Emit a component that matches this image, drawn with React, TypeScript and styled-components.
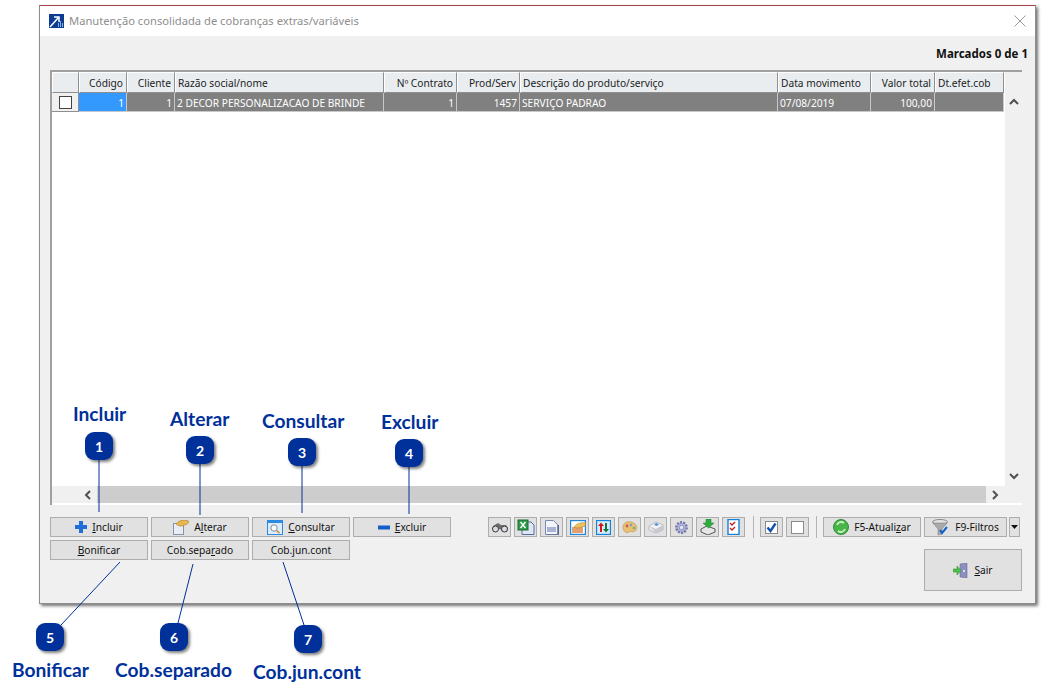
import React from "react";
import styled, { createGlobalStyle } from "styled-components";

const Global = createGlobalStyle`
  html, body { margin: 0; padding: 0; background: #fff; }
  body { font-family: "Noto Sans", "Liberation Sans", sans-serif; }
  #root { width: 1058px; height: 700px; position: relative; overflow: hidden; }
`;

const Page = styled.div`
  position: relative;
  width: 1058px;
  height: 700px;
  padding: 5px 0 0 39px;
  box-sizing: border-box;
  background: #fff;
`;

const Window = styled.div`
  width: 997px;
  height: 599px;
  box-sizing: border-box;
  display: flex;
  flex-direction: column;
  background: #f0f0f0;
  border: 1px solid #8d8d8d;
  border-top-color: #a8424c;
  box-shadow: 2px 2px 3px rgba(0, 0, 0, 0.55);
`;

const TitleBar = styled.div`
  height: 30px;
  flex: none;
  box-sizing: border-box;
  background: #fff;
  display: flex;
  align-items: center;
  padding: 0 9px 1px;
  gap: 5px;
`;

const TitleText = styled.span`
  flex: 1;
  font-size: 11.2px;
  color: #8e8e8e;
  white-space: nowrap;
`;

const Content = styled.div`
  flex: 1;
  display: flex;
  flex-direction: column;
  padding: 0 13px 0 10px;
`;

const Marked = styled.div`
  height: 34px;
  flex: none;
  display: flex;
  align-items: center;
  justify-content: flex-end;
  font-size: 11.5px;
  font-weight: 700;
  color: #111;
  margin-right: -6px;
`;

const GridFrame = styled.div`
  width: 972px;
  height: 435px;
  box-sizing: border-box;
  flex: none;
  border-top: 2px solid #a0a0a0;
  border-left: 2px solid #a0a0a0;
  background: #fff;
  display: flex;
  flex-direction: column;
`;

const GridBody = styled.div`
  flex: 1;
  display: flex;
  min-height: 0;
`;

const Table = styled.div`
  width: 952px;
  flex: none;
  display: flex;
  flex-direction: column;
`;

const columns = "27px 48px 48px 209px 73px 63px 258px 93px 64px 69px";

const HeaderRow = styled.div`
  display: grid;
  grid-template-columns: ${columns};
  height: 21px;
  flex: none;
`;

const HeadCell = styled.div<{ $right?: boolean }>`
  box-sizing: border-box;
  background: #e9edf0;
  border-right: 1px solid #8f8f8f;
  border-bottom: 1px solid #8f8f8f;
  border-top: 1px solid #fff;
  border-left: 1px solid #fff;
  font-size: 10.2px;
  color: #222;
  line-height: 20px;
  padding: 0 3px 0 2px;
  text-align: ${(p) => (p.$right ? "right" : "left")};
  white-space: nowrap;
  overflow: hidden;
`;

const DataRow = styled.div`
  display: grid;
  grid-template-columns: ${columns};
  height: 19px;
  flex: none;
`;

const DataCell = styled.div<{ $right?: boolean; $active?: boolean }>`
  box-sizing: border-box;
  background: ${(p) => (p.$active ? "#3399ff" : "#808080")};
  border-right: 1px solid #c8c8c8;
  border-bottom: 1px solid #c8c8c8;
  font-size: 10.2px;
  color: #fff;
  line-height: 20px;
  padding: 0 2px;
  text-align: ${(p) => (p.$right ? "right" : "left")};
  white-space: nowrap;
  overflow: hidden;
`;

const CheckCell = styled.div`
  box-sizing: border-box;
  background: #f0f0f0;
  border-right: 1px solid #8f8f8f;
  border-bottom: 1px solid #8f8f8f;
  display: flex;
  align-items: center;
  justify-content: center;
`;

const RowBox = styled.span`
  width: 11px;
  height: 11px;
  background: #fff;
  border: 1px solid #444;
`;

const VScroll = styled.div`
  width: 18px;
  flex: none;
  background: #f0f0f0;
  display: flex;
  flex-direction: column;
  justify-content: space-between;
  align-items: center;
  padding: 26px 0 5px;
  box-sizing: border-box;
  border-left: 1px solid #fff;
`;

const HScroll = styled.div`
  height: 17px;
  flex: none;
  display: flex;
  align-items: stretch;
  background: #f0f0f0;
  border-bottom: 2px solid #fff;
`;

const HCorner = styled.div`
  width: 27px;
  flex: none;
`;

const HBtn = styled.div`
  width: 18px;
  flex: none;
  display: flex;
  align-items: center;
  justify-content: center;
`;

const HTrack = styled.div`
  flex: none;
  width: 889px;
  background: #cdcdcd;
`;

const Footer = styled.div`
  display: grid;
  grid-template-columns: 1fr auto;
  padding-top: 12px;
`;

const ButtonColumn = styled.div`
  display: flex;
  flex-direction: column;
  gap: 3px;
`;

const ButtonRow = styled.div`
  display: flex;
  gap: 3px;
`;

const Btn = styled.div<{ $w?: number; $h?: number }>`
  box-sizing: border-box;
  width: ${(p) => p.$w ?? 98}px;
  height: ${(p) => p.$h ?? 20}px;
  flex: none;
  background: #e1e1e1;
  border: 1px solid #adadad;
  display: flex;
  align-items: center;
  justify-content: center;
  gap: 5px;
  font-size: 10.2px;
  color: #111;
  white-space: nowrap;
`;

const U = styled.span`
  text-decoration: underline;
  text-underline-offset: 1px;
`;

const RightArea = styled.div`
  display: flex;
  flex-direction: column;
  align-items: flex-end;
`;

const Tools = styled.div`
  display: flex;
  align-items: flex-start;
  gap: 3px;
`;

const ToolBtn = styled(Btn)`
  width: 23px;
  height: 20px;
`;

const Sep = styled.div<{ $left: number }>`
  width: 1px;
  height: 22px;
  background: #b4b4b4;
  margin: -1px 3px -1px ${(p) => p.$left}px;
  flex: none;
`;

const Caret = styled(Btn)`
  width: 11px;
  margin-left: -1px;
  margin-right: 2px;
`;

const ExitRow = styled.div`
  margin-top: 12px;
`;

const Overlay = styled.svg`
  position: absolute;
  left: 0;
  top: 0;
  pointer-events: none;
`;

const Badge = styled.div<{ $x: number; $y: number }>`
  position: absolute;
  left: ${(p) => p.$x}px;
  top: ${(p) => p.$y}px;
  width: 28px;
  height: 28px;
  border-radius: 9px;
  background: #00309a;
  color: #fff;
  font-family: "Lato", sans-serif;
  font-weight: 700;
  font-size: 14px;
  display: flex;
  align-items: center;
  justify-content: center;
  box-shadow: 2px 2px 3px rgba(0, 0, 0, 0.5);
`;

const Callout = styled.div<{ $x: number; $y: number }>`
  position: absolute;
  left: ${(p) => p.$x}px;
  top: ${(p) => p.$y}px;
  font-family: "Lato", sans-serif;
  font-weight: 700;
  font-size: 19.2px;
  line-height: 22px;
  color: #00309a;
  white-space: nowrap;
`;

const Plus = () => (
  <svg width="12" height="12" viewBox="0 0 12 12"><path d="M4 0h4v4h4v4H8v4H4V8H0V4h4z" fill="#1f6fd6" /></svg>
);
const Minus = () => (
  <svg width="12" height="5" viewBox="0 0 12 5"><rect width="12" height="4" y="0.5" fill="#1560c8" /></svg>
);
const Edit = () => (
  <svg width="16" height="15" viewBox="0 0 16 15">
    <rect x="0.5" y="3.5" width="10" height="11" fill="#e8ecf4" stroke="#8a94a8" />
    <path d="M3 4 C5 1 10 -1 15.500 1 C16 3 14 5 11 5 C9 7 5 6 3 4z" fill="#e9b64f" stroke="#a9782a" strokeWidth="0.6" />
  </svg>
);
const Search = () => (
  <svg width="16" height="15" viewBox="0 0 16 15">
    <rect x="0.5" y="0.5" width="15" height="14" fill="#dcecfb" stroke="#2b8be0" />
    <rect x="1" y="1" width="14" height="2" fill="#2b8be0" />
    <circle cx="7" cy="8" r="3.2" fill="#fff" stroke="#7a8aa0" />
    <path d="M9.5 10.5l3 2.5" stroke="#c88a2a" strokeWidth="1.6" />
  </svg>
);
const Binoculars = () => (
  <svg width="16" height="11" viewBox="0 0 16 11">
    <path d="M1 4l5-3 3 2 5 0 2 3-1 4H11L8 7H6L4 10H2L0 7z" fill="#6d6d6d" />
    <circle cx="3.500" cy="7" r="3" fill="#d9dce2" stroke="#3d3d3d" />
    <circle cx="12.500" cy="7" r="3" fill="#d9dce2" stroke="#3d3d3d" />
  </svg>
);
const Excel = () => (
  <svg width="18" height="16" viewBox="0 0 18 16">
    <path d="M5 3h9l3 3v9.500H5z" fill="#dfe6f4" stroke="#53719f" />
    <rect x="1" y="1" width="10" height="10" fill="#2f9a4a" stroke="#1d6b33" />
    <path d="M3.500 3l5 6M8.500 3l-5 6" stroke="#fff" strokeWidth="1.400" />
  </svg>
);
const Doc = () => (
  <svg width="14" height="15" viewBox="0 0 14 15">
    <path d="M0.5 .5h8l4 4v10H.5z" fill="#f2f4fb" stroke="#7c88ad" /><rect x="2" y="7" width="9" height="5" fill="#a9b4d4" />
    <path d="M13.500 5v10H2" fill="none" stroke="#5d678a" />
  </svg>
);
const Calendar = () => (
  <svg width="16" height="15" viewBox="0 0 16 15">
    <rect x=".5" y=".5" width="15" height="14" fill="#fff" stroke="#1f86dc" strokeWidth="1.400" />
    <rect x="2" y="7" width="11" height="6" fill="#e3a06d" />
    <path d="M4 7 C7 3 11 2 16 3 L15 6 C12 7 9 8 7 8z" fill="#efc15a" stroke="#a9782a" strokeWidth="0.5" />
  </svg>
);
const Sort = () => (
  <svg width="15" height="15" viewBox="0 0 15 15">
    <rect x=".5" y=".5" width="14" height="14" fill="#d7ecfb" stroke="#1183dd" strokeWidth="1.300" />
    <path d="M5 2.500L8 6H6v6H4V6H2z" fill="#d81818" /><path d="M10 12.500L13 9h-2V3H9v6H7z" fill="#0f7a38" />
  </svg>
);
const Palette = () => (
  <svg width="16" height="13" viewBox="0 0 16 13">
    <path d="M1 6 C1 2 5 0 9 1 C14 2 16 6 14 9 C12 12 9 10 7 11 C4 13 1 10 1 6z" fill="#e8c074" stroke="#bb9447" strokeWidth=".6" />
    <circle cx="5" cy="5" r="1.400" fill="#c95858" /><circle cx="9" cy="4" r="1.300" fill="#6f9fd8" /><circle cx="12" cy="7" r="1.300" fill="#6fb36f" />
  </svg>
);
const Eraser = () => (
  <svg width="16" height="14" viewBox="0 0 16 14">
    <path d="M1 6l7-4 7 3v5l-7 3-7-3z" fill="#f2f2f5" stroke="#a6a6ad" strokeWidth=".7" />
    <path d="M1 6l7 3 7-4v5l-7 3z" fill="#c9c9cf" /><path d="M6 4l3-1 2 2-3 1z" fill="#4f95dd" />
  </svg>
);
const Gear = () => (
  <svg width="15" height="15" viewBox="0 0 15 15">
    <circle cx="7.500" cy="7.500" r="5.200" fill="#b3b5dc" stroke="#7779a8" strokeWidth="2.400" strokeDasharray="2 1.200" />
    <circle cx="7.500" cy="7.500" r="2.200" fill="#e8e8f4" stroke="#7779a8" strokeWidth=".7" />
  </svg>
);
const Import = () => (
  <svg width="16" height="16" viewBox="0 0 16 16">
    <path d="M1 10l6-3 8 3v3l-7 3-7-3z" fill="#e6e6e6" stroke="#333" strokeWidth=".8" />
    <path d="M6 0h5v4h3l-5.500 5L3 4h3z" fill="#2fae3d" stroke="#187a24" strokeWidth=".5" />
  </svg>
);
const CheckList = () => (
  <svg width="15" height="16" viewBox="0 0 15 16">
    <rect x="2" y=".5" width="11" height="15" fill="#fff" stroke="#1183dd" strokeWidth="1.400" />
    <path d="M4 4l2 2 3-3M4 9l2 2 3-3" fill="none" stroke="#c82020" strokeWidth="1.400" />
  </svg>
);
const CheckBig = ({ on }: { on?: boolean }) => (
  <svg width="13" height="13" viewBox="0 0 13 13">
    <rect x=".5" y=".5" width="12" height="12" fill="#fff" stroke="#8a8a8a" />
    {on && <path d="M2.500 6.500l3 3.500 5-7.500" fill="none" stroke="#0f4fb0" strokeWidth="2.400" />}
  </svg>
);
const Refresh = () => (
  <svg width="16" height="16" viewBox="0 0 16 16">
    <circle cx="8" cy="8" r="7.500" fill="#49b548" stroke="#2f8a35" />
    <path d="M4 6a4.500 4.500 0 0 1 7-2M12 10a4.500 4.500 0 0 1-7 2" fill="none" stroke="#c9f0c0" strokeWidth="1.800" />
  </svg>
);
const Funnel = () => (
  <svg width="18" height="17" viewBox="0 0 18 17">
    <ellipse cx="8" cy="3" rx="7.500" ry="2.500" fill="#e2e2e2" stroke="#888" />
    <path d="M1 4l5 6v6l4-1v-5l5-6z" fill="#a9a9a9" stroke="#777" strokeWidth=".5" />
    <path d="M8 11l2 3 5-6" fill="none" stroke="#1560c8" strokeWidth="2" />
  </svg>
);
const Exit = () => (
  <svg width="16" height="15" viewBox="0 0 16 15">
    <path d="M7 1l7-1v15l-7-1z" fill="#8d8fc0" stroke="#5d5f90" strokeWidth=".5" />
    <circle cx="11" cy="8" r="0.900" fill="#fff" />
    <path d="M0 6h4V3l4 4.500L4 12V9H0z" fill="#4cc04c" stroke="#2a8a2a" strokeWidth=".5" />
  </svg>
);
const Logo = () => (
  <svg width="15" height="14" viewBox="0 0 15 14">
    <rect width="15" height="14" fill="#0d3d91" />
    <path d="M1 13L9 4M5 3h5v5" fill="none" stroke="#fff" strokeWidth="1.500" />
    <path d="M9 13V9h1v4zM11 13V7h1v6zM13 13V9h1v4z" fill="#8ab1dc" />
  </svg>
);
const Close = () => (
  <svg width="12" height="12" viewBox="0 0 12 12"><path d="M.5.5l11 11M11.500.5l-11 11" stroke="#9a9a9a" /></svg>
);
const Chevron = ({ d }: { d: "u" | "d" | "l" | "r" }) => {
  const paths = { u: "M1 6l4-4 4 4", d: "M1 3l4 4 4-4", l: "M7 1L3 5l4 4", r: "M3 1l4 4-4 4" };
  return <svg width="10" height="10" viewBox="0 0 10 10"><path d={paths[d]} fill="none" stroke="#505050" strokeWidth="2" /></svg>;
};
const DownCaret = () => (
  <svg width="7" height="4" viewBox="0 0 7 4"><path d="M0 0h7L3.500 4z" fill="#111" /></svg>
);

const heads: [string, boolean][] = [
  ["Código", true], ["Cliente", true], ["Razão social/nome", false], ["Nº Contrato", true],
  ["Prod/Serv", true], ["Descrição do produto/serviço", false], ["Data movimento", false],
  ["Valor total", true], ["Dt.efet.cob", false],
];
const cells: [string, boolean][] = [
  ["1", true], ["1", true], ["2 DECOR PERSONALIZACAO DE BRINDE", false], ["1", true], ["1457", true],
  ["SERVIÇO PADRAO", false], ["07/08/2019", false], ["100,00", true], ["", false],
];
const toolIcons = [Binoculars, Excel, Doc, Calendar, Sort, Palette, Eraser, Gear, Import, CheckList];

const badges = [
  { n: 1, x: 85, y: 432 }, { n: 2, x: 186, y: 436 }, { n: 3, x: 288, y: 438 }, { n: 4, x: 395, y: 439 },
  { n: 5, x: 36, y: 623 }, { n: 6, x: 160, y: 623 }, { n: 7, x: 294, y: 625 },
];
const labels = [
  { t: "Incluir", x: 73, y: 403 }, { t: "Alterar", x: 170, y: 408 }, { t: "Consultar", x: 262, y: 410 },
  { t: "Excluir", x: 381, y: 411 }, { t: "Bonificar", x: 12, y: 659 }, { t: "Cob.separado", x: 115, y: 659 },
  { t: "Cob.jun.cont", x: 253, y: 661 },
];
const lines = [
  [99, 460, 99, 512], [200, 464, 200, 515], [302, 466, 302, 513], [409, 467, 409, 514],
  [120, 562, 61, 625], [193, 564, 178, 623], [283, 562, 304, 625],
];

export default function App() {
  return (
    <Page>
      <Global />
      <Window>
        <TitleBar>
          <Logo />
          <TitleText>Manutenção consolidada de cobranças extras/variáveis</TitleText>
          <Close />
        </TitleBar>
        <Content>
          <Marked>Marcados 0 de 1</Marked>
          <GridFrame>
            <GridBody>
              <Table>
                <HeaderRow>
                  <HeadCell />
                  {heads.map(([t, r]) => <HeadCell key={t} $right={r}>{t}</HeadCell>)}
                </HeaderRow>
                <DataRow>
                  <CheckCell><RowBox /></CheckCell>
                  {cells.map(([t, r], i) => <DataCell key={i} $right={r} $active={i === 0}>{t}</DataCell>)}
                </DataRow>
              </Table>
              <VScroll><Chevron d="u" /><Chevron d="d" /></VScroll>
            </GridBody>
            <HScroll>
              <HCorner />
              <HBtn><Chevron d="l" /></HBtn>
              <HTrack />
              <HBtn><Chevron d="r" /></HBtn>
            </HScroll>
          </GridFrame>
          <Footer>
            <ButtonColumn>
              <ButtonRow>
                <Btn><Plus /><span><U>I</U>ncluir</span></Btn>
                <Btn><Edit /><span>A<U>l</U>terar</span></Btn>
                <Btn><Search /><span><U>C</U>onsultar</span></Btn>
                <Btn><Minus /><span><U>E</U>xcluir</span></Btn>
              </ButtonRow>
              <ButtonRow>
                <Btn><span><U>B</U>onificar</span></Btn>
                <Btn><span>Cob.sepa<U>r</U>ado</span></Btn>
                <Btn><span>Cob.<U>j</U>un.cont</span></Btn>
              </ButtonRow>
            </ButtonColumn>
            <RightArea>
              <Tools>
                {toolIcons.map((I, i) => <ToolBtn key={i}><I /></ToolBtn>)}
                <Sep $left={5} />
                <ToolBtn><CheckBig on /></ToolBtn>
                <ToolBtn><CheckBig /></ToolBtn>
                <Sep $left={4} />
                <Btn><Refresh /><span>F5-Atuali<U>z</U>ar</span></Btn>
                <Btn $w={83}><Funnel /><span>F9-Filtros</span></Btn>
                <Caret><DownCaret /></Caret>
              </Tools>
              <ExitRow>
                <Btn $h={42}><Exit /><span><U>S</U>air</span></Btn>
              </ExitRow>
            </RightArea>
          </Footer>
        </Content>
      </Window>
      <Overlay width="1058" height="700" viewBox="0 0 1058 700">
        {lines.map(([a, b, c, d], i) => <line key={i} x1={a} y1={b} x2={c} y2={d} stroke="#00309a" strokeWidth="1" />)}
      </Overlay>
      {badges.map((b) => <Badge key={b.n} $x={b.x} $y={b.y}>{b.n}</Badge>)}
      {labels.map((l) => <Callout key={l.t} $x={l.x} $y={l.y}>{l.t}</Callout>)}
    </Page>
  );
}
